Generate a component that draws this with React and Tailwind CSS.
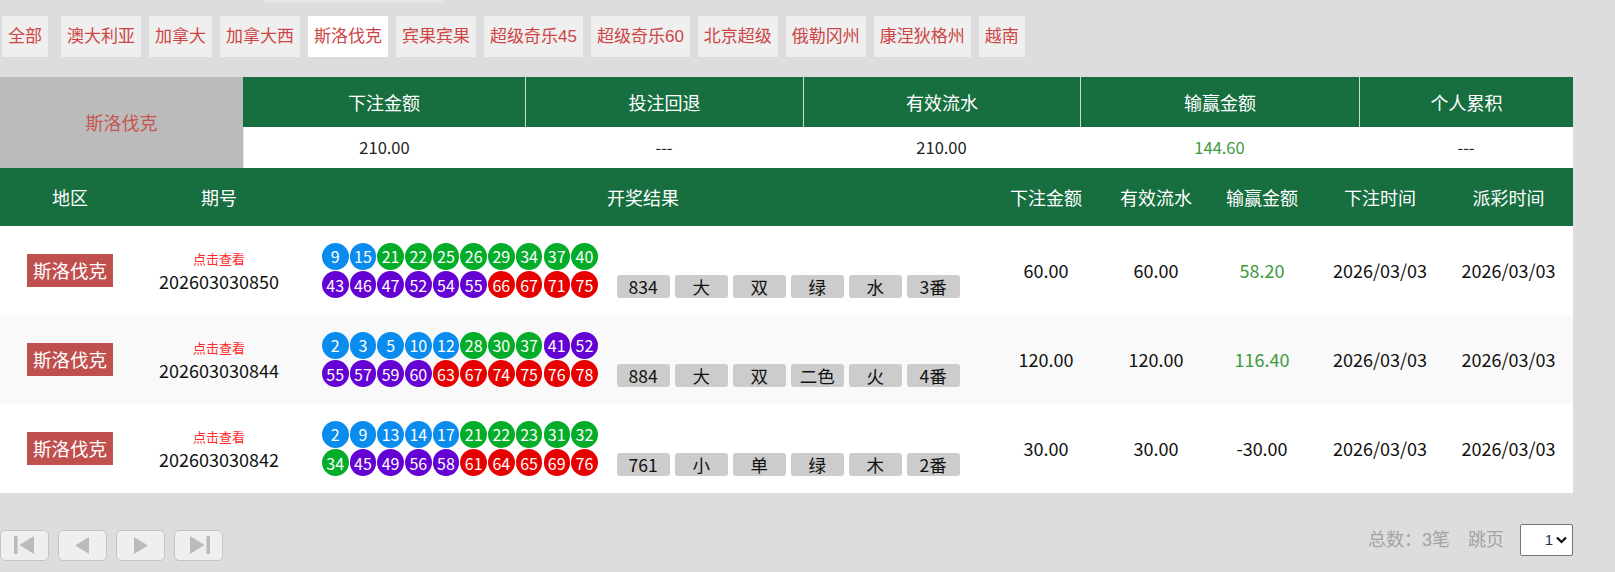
import React from 'react';

const tabs = ['全部', '澳大利亚', '加拿大', '加拿大西', '斯洛伐克', '宾果宾果', '超级奇乐45', '超级奇乐60', '北京超级', '俄勒冈州', '康涅狄格州', '越南'];

const summaryHeads = ['下注金额', '投注回退', '有效流水', '输赢金额', '个人累积'];

const listHeads = ['地区', '期号', '开奖结果', '下注金额', '有效流水', '输赢金额', '下注时间', '派彩时间'];

const records = [
  {
    issue: '202603030850',
    balls: [9, 15, 21, 22, 25, 26, 29, 34, 37, 40, 43, 46, 47, 52, 54, 55, 66, 67, 71, 75],
    tags: ['834', '大', '双', '绿', '水', '3番'],
    bet: '60.00',
    valid: '60.00',
    win: '58.20',
    up: true,
  },
  {
    issue: '202603030844',
    balls: [2, 3, 5, 10, 12, 28, 30, 37, 41, 52, 55, 57, 59, 60, 63, 67, 74, 75, 76, 78],
    tags: ['884', '大', '双', '二色', '火', '4番'],
    bet: '120.00',
    valid: '120.00',
    win: '116.40',
    up: true,
  },
  {
    issue: '202603030842',
    balls: [2, 9, 13, 14, 17, 21, 22, 23, 31, 32, 34, 45, 49, 56, 58, 61, 64, 65, 69, 76],
    tags: ['761', '小', '单', '绿', '木', '2番'],
    bet: '30.00',
    valid: '30.00',
    win: '-30.00',
    up: false,
  },
];

const ballColor = (n) => {
  if (n <= 20) return 'bg-[#0a8cef]';
  if (n <= 40) return 'bg-[#04ad29]';
  if (n <= 60) return 'bg-[#6401d3]';
  return 'bg-[#e60000]';
};

const Ball = ({ n }) => (
  <span className={`flex h-[26.5px] w-[26.5px] items-center justify-center rounded-full text-[16px] leading-none text-white ${ballColor(n)}`}>
    {n}
  </span>
);

const PageButton = ({ children }) => (
  <button className="flex h-[31px] w-[49px] items-center justify-center rounded-[5px] border border-[#c4c4c4] bg-[#efefef]">
    {children}
  </button>
);

const listCols = 'grid grid-cols-[140px_158px_690px_116px_104px_108px_128px_129px]';

export default function App() {
  return (
    <div className="min-h-[572px] w-full bg-[#dddddd] font-['Noto_Sans_CJK_SC',sans-serif] text-[#111]">
      <div className="h-[16px]">
        <div className="ml-[264px] h-[3px] w-[180px] rounded-b-full bg-[#e5e5e5]" />
      </div>

      <div className="flex h-[41px] pl-[2px]">
        {tabs.map((t, i) => (
          <div
            key={t}
            className={`flex items-center px-[6px] font-['Liberation_Sans','Noto_Sans_CJK_SC',sans-serif] text-[17px] text-[#cd4545] ${
              i === 4 ? 'bg-white' : 'bg-[#efefef]'
            } ${i === 0 ? 'mr-[13px]' : 'mr-[8px]'}`}
          >
            {t}
          </div>
        ))}
      </div>

      <div className="mt-[20px] grid w-[1573px] grid-cols-[243px_282px_278px_277px_279px_214px] grid-rows-[50px_41px]">
        <div className="row-span-2 flex items-center justify-center bg-[#bbbbbb] text-[18px] text-[#c65552]">斯洛伐克</div>
        {summaryHeads.map((h, i) => (
          <div
            key={h}
            className={`flex items-center justify-center bg-[#176e3f] text-[18px] text-white ${i > 0 ? 'border-l border-[#c9d9cf]' : ''}`}
          >
            {h}
          </div>
        ))}
        {['210.00', '---', '210.00', '144.60', '---'].map((v, i) => (
          <div
            key={i}
            className={`flex items-center justify-center bg-white text-[16.5px] ${i === 3 ? 'text-[#3d9a3d]' : 'text-[#222]'} ${i === 0 ? 'border-l border-[#e4e4e4]' : ''}`}
          >
            {v}
          </div>
        ))}
      </div>

      <div className="w-[1573px]">
        <div className={`${listCols} h-[58px] bg-[#176e3f] text-[18px] text-white`}>
          {listHeads.map((h) => (
            <div key={h} className="flex items-center justify-center">
              {h}
            </div>
          ))}
        </div>

        {records.map((r, idx) => (
          <div key={r.issue} className={`${listCols} h-[89px] text-[18px] ${idx === 1 ? 'bg-[#f9f9f9]' : 'bg-white'}`}>
            <div className="flex items-center justify-center">
              <span className="flex h-[33px] items-center bg-[#c0504e] px-[6px] text-[18.5px] text-white">斯洛伐克</span>
            </div>
            <div className="flex flex-col items-center justify-center pt-[2px]">
              <span className="text-[13px] leading-[18px] text-[#ff2a2a]">点击查看</span>
              <span className="leading-[26px]">{r.issue}</span>
            </div>
            <div className="flex items-center pl-[24px]">
              <div className="flex items-end gap-[19px]">
                <div className="flex flex-col gap-[1.8px]">
                  <div className="flex gap-[1.2px]">
                    {r.balls.slice(0, 10).map((n) => (
                      <Ball key={n} n={n} />
                    ))}
                  </div>
                  <div className="flex gap-[1.2px]">
                    {r.balls.slice(10).map((n) => (
                      <Ball key={n} n={n} />
                    ))}
                  </div>
                </div>
                <div className="flex gap-[5px]">
                  {r.tags.map((t, i) => (
                    <span
                      key={i}
                      className="flex h-[23px] w-[53px] items-center justify-center rounded-[3px] bg-[#cccccc] text-[17.5px] leading-none"
                    >
                      {t}
                    </span>
                  ))}
                </div>
              </div>
            </div>
            <div className="flex items-center justify-center">{r.bet}</div>
            <div className="flex items-center justify-center">{r.valid}</div>
            <div className={`flex items-center justify-center ${r.up ? 'text-[#3d9a3d]' : ''}`}>{r.win}</div>
            <div className="flex items-center justify-center">2026/03/03</div>
            <div className="flex items-center justify-center">2026/03/03</div>
          </div>
        ))}
      </div>

      <div className="mt-[31px] flex w-[1573px] items-start justify-between">
        <div className="flex gap-[9px] pt-[5.5px]">
          <PageButton>
            <svg width="22" height="18" viewBox="0 0 22 18" fill="#bbbbbb">
              <rect x="0" y="0" width="3.5" height="18" />
              <polygon points="20,0 20,18 5.5,9" />
            </svg>
          </PageButton>
          <PageButton>
            <svg width="15" height="17" viewBox="0 0 15 17" fill="#bbbbbb">
              <polygon points="14,0 14,17 0,8.5" />
            </svg>
          </PageButton>
          <PageButton>
            <svg width="15" height="17" viewBox="0 0 15 17" fill="#bbbbbb">
              <polygon points="1,0 1,17 15,8.5" />
            </svg>
          </PageButton>
          <PageButton>
            <svg width="22" height="18" viewBox="0 0 22 18" fill="#bbbbbb">
              <polygon points="2,0 2,18 16.5,9" />
              <rect x="18.5" y="0" width="3.5" height="18" />
            </svg>
          </PageButton>
        </div>
        <div className="flex h-[32px] items-center font-['Liberation_Sans','Noto_Sans_CJK_SC',sans-serif] text-[18px] text-[#a3a3a3]">
          <span>总数：3笔</span>
          <span className="ml-[18px]">跳页</span>
          <div className="ml-[16px] flex h-[32px] w-[53px] items-center justify-end gap-[3px] rounded-[2px] border border-[#777] bg-white pr-[5px] text-[15px] text-[#1d3557]">
            <span>1</span>
            <svg width="11" height="8" viewBox="0 0 11 8" fill="none" stroke="#111" strokeWidth="2.2">
              <polyline points="1,1.5 5.5,6 10,1.5" />
            </svg>
          </div>
        </div>
      </div>
    </div>
  );
}
